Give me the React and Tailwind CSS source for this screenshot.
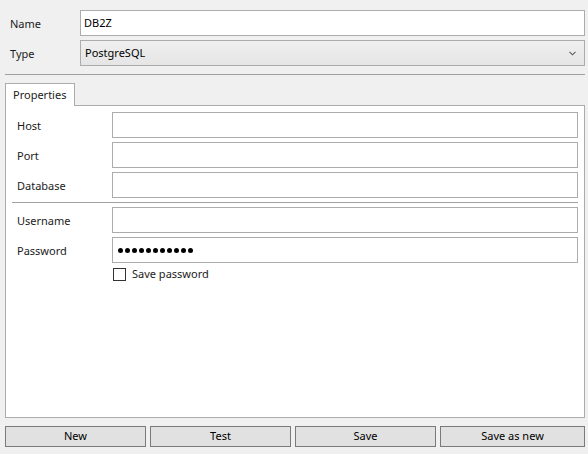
import React from 'react'

const font = { fontFamily: '"Noto Sans", "Open Sans", sans-serif' }

function Field({ label, children, labelW }) {
  return (
    <div className="flex items-center h-[26px]">
      <div className={labelW + ' shrink-0 pt-[2px] text-[11px] text-[#1b1b1b]'}>{label}</div>
      {children}
    </div>
  )
}

function TextBox({ value }) {
  return (
    <div className="flex-1 h-[26px] bg-white border border-[#acacac] flex items-center pl-[3px] pt-[1px] text-[11px] text-black">
      {value}
    </div>
  )
}

function Dots({ n }) {
  return (
    <div className="flex gap-[2px]">
      {Array.from({ length: n }).map(function(_, i) {
        return <div key={i} className="w-[5px] h-[5px] rounded-full bg-black" />
      })}
    </div>
  )
}

export default function App() {
  return (
    <div style={font} className="w-[588px] h-[454px] bg-[#f0f0f0] flex flex-col pt-[10px] pl-[5px] pr-[3px] overflow-hidden">
      <Field label="Name" labelW="w-[75px] pl-[5px]">
        <TextBox value="DB2Z" />
      </Field>
      <div className="mt-[4px]">
        <Field label="Type" labelW="w-[75px] pl-[5px]">
          <div className="flex-1 h-[26px] border border-[#acacac] bg-gradient-to-b from-[#f0f0f0] to-[#e5e5e5] flex items-center justify-between pl-[4px] pt-[1px] pr-[8px] text-[11px] text-black">
            <span>PostgreSQL</span>
            <svg width="7" height="5" viewBox="0 0 7 5" fill="none">
              <path d="M0.5 0.8 L3.5 3.8 L6.5 0.8" stroke="#5a5a5a" strokeWidth="1.1" />
            </svg>
          </div>
        </Field>
      </div>

      <div className="mt-[8px] border-t border-[#a0a0a0]" />

      <div className="mt-[8px] flex">
        <div className="relative z-10 -mb-px w-[70px] h-[23px] bg-white border border-b-0 border-[#acacac] flex items-center pl-[7px] pt-[1px] text-[11px] text-[#1b1b1b]">
          Properties
        </div>
      </div>
      <div className="h-[313px] bg-white border border-[#acacac] pt-[6px] pr-[6px] pl-[11px] flex flex-col">
        <div className="flex flex-col gap-[4px]">
          <Field label="Host" labelW="w-[95px]"><TextBox value="" /></Field>
          <Field label="Port" labelW="w-[95px]"><TextBox value="" /></Field>
          <Field label="Database" labelW="w-[95px]"><TextBox value="" /></Field>
        </div>
        <div className="mt-[4px] mb-[4px] ml-[-5px] border-t border-[#a0a0a0]" />
        <div className="flex flex-col gap-[4px]">
          <Field label="Username" labelW="w-[95px]"><TextBox value="" /></Field>
          <Field label="Password" labelW="w-[95px]">
            <div className="flex-1 h-[26px] bg-white border border-[#acacac] flex items-center pl-[5px]">
              <Dots n={11} />
            </div>
          </Field>
        </div>
        <div className="mt-[3px] ml-[96px] flex items-center gap-[6px]">
          <div className="w-[13px] h-[13px] border border-[#333333] bg-white" />
          <span className="text-[11px] text-[#1b1b1b]">Save password</span>
        </div>
      </div>

      <div className="mt-[8px] flex gap-[4px]">
        {['New', 'Test', 'Save'].map(function(t) {
          return (
            <div key={t} className="w-[141px] h-[21px] bg-[#e1e1e1] border border-[#7a7a7a] flex items-center justify-center text-[11px] text-black">
              {t}
            </div>
          )
        })}
        <div className="flex-1 h-[21px] bg-[#e1e1e1] border border-[#7a7a7a] flex items-center justify-center text-[11px] text-black">
          Save as new
        </div>
      </div>
    </div>
  )
}
